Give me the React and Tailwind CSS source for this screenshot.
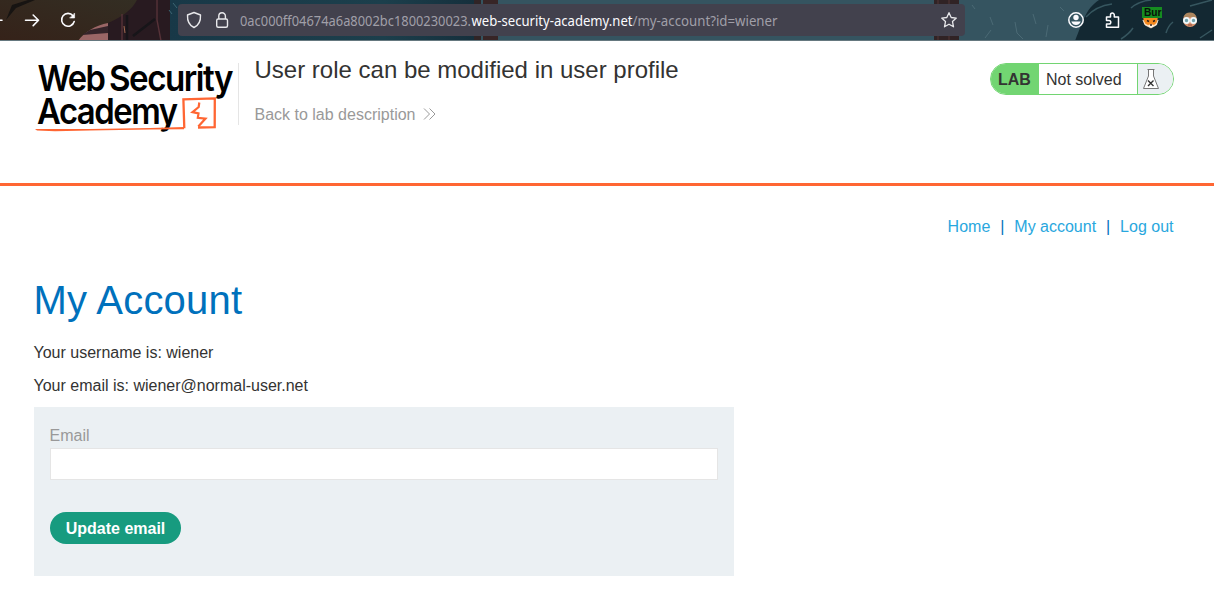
import React from "react";

function ToolbarArt() {
  return (
    <svg className="absolute inset-0" width="1214" height="41" viewBox="0 0 1214 41" aria-hidden="true">
      <defs>
        <linearGradient id="ground" x1="0" x2="1" y1="1" y2="0">
          <stop offset="0" stopColor="#352219" />
          <stop offset="1" stopColor="#332f24" />
        </linearGradient>
        <linearGradient id="sky" x1="0" x2="1" y1="0" y2="0">
          <stop offset="0" stopColor="#183847" />
          <stop offset="0.7" stopColor="#1c3f4c" />
          <stop offset="1" stopColor="#152f3c" />
        </linearGradient>
      </defs>
      <rect width="1214" height="41" fill="#355460" />
      <rect x="168" width="308" height="41" fill="url(#sky)" />
      <rect width="170" height="41" fill="url(#ground)" />
      <path d="M6 20L16 8L35 0H28L12 5Z" fill="#171412" />
      <path d="M78 41C84 32 96 25 108 23V41Z" fill="#9b6666" />
      <path d="M90 30L108 26V33L82 35Z" fill="#35242a" />
      <path d="M108 23C122 17 132 10 137 0H170V41H108V23Z" fill="#281a20" />
      <path d="M122 14V41M157 0V20L161 41" stroke="#563238" strokeWidth="1.4" fill="none" />
      <path d="M127 41V15M133 36L155 19" stroke="#171519" strokeWidth="2.5" fill="none" />
      <path d="M124 26L125 33" stroke="#a06a50" />
      <path d="M169 10L172 14M173 3L177 8" stroke="#3c6673" />
      <rect x="474" width="7" height="41" fill="#302426" />
      <rect x="483" width="15" height="41" fill="#372526" />
      <rect x="934" width="25" height="41" fill="#302325" />
      <path d="M938 0V41M949 0V41" stroke="#533737" />
      <path d="M1099 0C1085 9 1082 24 1075 41H1214V0Z" fill="#132832" />
      <path d="M1086 17Q1096 6 1112 4M1131 8Q1139 1 1151 0M1190 6L1212 0M1121 39Q1129 34 1133 28M1166 33Q1168 26 1173 22M1200 38L1212 30" stroke="#36565f" strokeWidth="1.5" fill="none" />
      <path d="M972 5L975 9M990 17L993 25M985 38L991 30M1015 22L1017 33L1023 39M1033 14L1036 24M1048 25L1046 37M1060 7L1064 11" stroke="#4b6a75" fill="none" />
      <rect y="40" width="1214" height="1" fill="#65787f" />
    </svg>
  );
}

function BrowserBar() {
  return (
    <div className="relative h-[41px] w-full overflow-hidden">
      <ToolbarArt />
      <div className="relative flex h-10 items-center text-white">
        <svg width="178" height="40" viewBox="0 0 178 40" fill="none" stroke="#fbfbfe" strokeWidth="1.6" strokeLinecap="round" strokeLinejoin="round">
          <path d="M-4 20.3H2M25.5 20.3H38.5M33.2 15L38.5 20.3L33.2 25.6" />
          <path d="M73 15.8A6.4 6.4 0 1 0 74.2 21.5" />
          <path d="M74.6 13.4V18H70Z" fill="#fbfbfe" strokeWidth="0.6" />
        </svg>
        <div className="flex h-8 w-[787px] items-center rounded bg-[#42414d]">
          <svg width="62" height="32" viewBox="178 4 62 32" fill="none" stroke="#e8e8eb" strokeWidth="1.4" strokeLinejoin="round">
            <path d="M194 12.5L200.5 15C200.8 21 198.5 25.5 194 27.5C189.5 25.5 187.2 21 187.5 15Z" />
            <rect x="216.7" y="19" width="10.8" height="8.2" rx="1.5" />
            <path d="M218.8 19V16A3.3 3.3 0 0 1 225.4 16V19" />
          </svg>
          <div className="w-[700px] whitespace-nowrap font-['Noto_Sans',sans-serif] text-[13.5px]">
            <svg width="545" height="32" viewBox="0 0 545 32" className="block">
              <text x="0" y="22" textLength="231" lengthAdjust="spacingAndGlyphs" fill="#a09fa8">0ac000ff04674a6a8002bc1800230023.</text>
              <text x="231.5" y="22" textLength="161" lengthAdjust="spacingAndGlyphs" fill="#fbfbfe">web-security-academy.net</text>
              <text x="392.5" y="22" textLength="145" lengthAdjust="spacingAndGlyphs" fill="#a09fa8">/my-account?id=wiener</text>
            </svg>
          </div>
          <svg width="18" height="18" viewBox="0 0 18 18" fill="none" stroke="#e8e8eb" strokeWidth="1.3" strokeLinejoin="round">
            <path d="M9 1.7L11.2 6.5L16.3 7.1L12.5 10.6L13.5 15.8L9 13.2L4.5 15.8L5.5 10.6L1.7 7.1L6.8 6.5Z" />
          </svg>
        </div>
        <svg width="249" height="40" viewBox="965 0 249 40" fill="none">
          <circle cx="1076" cy="20" r="7.2" stroke="#fbfbfe" strokeWidth="1.5" />
          <circle cx="1076" cy="17.5" r="2.7" fill="#fbfbfe" />
          <path d="M1071.3 21.5H1080.7C1080 24 1078 25 1076 25S1072 24 1071.3 21.5Z" fill="#fbfbfe" />
          <path d="M1106.5 17H1110.5V15A1.9 1.9 0 0 1 1114.3 15V17H1118.5V27.3H1106.5V24H1109A1.8 1.8 0 0 0 1109 20.4H1106.5Z" stroke="#fbfbfe" strokeWidth="1.5" strokeLinejoin="round" />
          <path d="M1143 15L1146 18L1155 18L1158 15L1157 24L1151 28L1144 24Z" fill="#f58a20" />
          <path d="M1143 20L1145 24L1148 25.5L1151 24.5L1154 25.5L1157 23L1158 20L1156.5 25L1151 28L1145 25Z" fill="#fff1df" stroke="#fff1df" strokeWidth="0.6" />
          <path d="M1147 20.5L1149 21.5M1153 21.5L1155 20.5M1150 25H1152" stroke="#30201c" strokeWidth="1.4" />
          <rect x="1142" y="7" width="20" height="11" fill="#168c20" />
          <text x="1144" y="16.3" textLength="17.5" lengthAdjust="spacingAndGlyphs" fontSize="11" fontWeight="700" fontFamily="Liberation Sans, sans-serif" fill="#071008">Bur</text>
          <circle cx="1190" cy="20" r="7" fill="#d7926d" />
          <path d="M1183.5 17A7 7 0 0 1 1196.5 17Z" fill="#ad865e" />
          <circle cx="1186.5" cy="20.5" r="2.6" fill="#70a2ac" stroke="#eef8fb" strokeWidth="1.8" />
          <circle cx="1193.5" cy="20.5" r="2.6" fill="#70a2ac" stroke="#eef8fb" strokeWidth="1.8" />
          <path d="M1188 25H1192" stroke="#8f493f" />
        </svg>
      </div>
    </div>
  );
}

function AcademyLogo() {
  return (
    <svg width="204" height="80" viewBox="34 57 204 80" className="block overflow-visible" aria-label="Web Security Academy">
      <g fontFamily="Inter, Roboto, sans-serif" fontWeight="600" fontSize="35.5" letterSpacing="-1.6" fill="#000">
        <text x="37.5" y="91.3" textLength="67" lengthAdjust="spacingAndGlyphs">Web</text>
        <text x="109" y="91.3" textLength="123" lengthAdjust="spacingAndGlyphs">Security</text>
        <text x="37" y="124.3" textLength="139.5" lengthAdjust="spacingAndGlyphs">Academy</text>
      </g>
      <path d="M35 129L90 128.9L150 128L184 127L184 129.2L150 129.6L90 130.6L55 131.2L37 130.4Z" fill="#ff6633" />
      <path d="M184.3 128.2L183.4 99.4L214.8 98.4L214.7 127.2L198 127.5" fill="none" stroke="#ff6633" strokeWidth="2.3" />
      <path d="M199.3 102.5L198.7 107L192.5 112.2L198.5 113.4L197.8 117.8L205.5 118.6L198.3 126.5" fill="none" stroke="#ff6633" strokeWidth="2.2" />
    </svg>
  );
}

function LabStatus() {
  return (
    <div className="mt-[22px] flex h-8 w-[184px] items-stretch overflow-hidden rounded-full border border-[#72d572] bg-white text-base leading-8 text-[#333332]">
      <div className="w-12 bg-[#72d572] pl-[7px] font-bold">LAB</div>
      <div className="w-[98px] pl-[7px]">Not solved</div>
      <div className="flex-1 border-l border-[#72d572] bg-[#ebf0f3] pt-1 pl-[5px]">
        <svg width="17" height="22" viewBox="0 0 17 22" fill="none" stroke="#777" strokeWidth="1">
          <path d="M4.5 1.5H11.5M5.5 1.5V8L0.5 20.5H15.5L10.5 8V1.5" fill="#fff" />
          <path d="M5 12.5L10.5 18M10.5 12.5L5 18" stroke="#333" strokeWidth="1.4" />
        </svg>
      </div>
    </div>
  );
}

export default function App() {
  return (
    <div className="h-[596px] w-[1214px] overflow-hidden bg-white font-['Liberation_Sans',Arial,sans-serif] text-base text-[#333332]">
      <BrowserBar />
      <header className="flex h-[145px] border-b-3 border-[#ff6633] pr-10 pl-[34px]">
        <div className="pt-4">
          <AcademyLogo />
        </div>
        <div className="mt-[22px] h-[62px] w-px bg-[#e5e5e5]" />
        <div className="flex-1 pt-[14px] pl-[15.5px]">
          <h2 className="text-2xl leading-[30px]">User role can be modified in user profile</h2>
          <a className="mt-5 flex items-center gap-2 leading-5 text-[#999]">
            Back to lab description
            <svg width="13" height="12" viewBox="0 0 13 12" fill="none" stroke="#999" strokeWidth="1" className="-mt-0.5">
              <path d="M1 0.5L6.5 6L1 11.5M6.5 0.5L12 6L6.5 11.5" />
            </svg>
          </a>
        </div>
        <LabStatus />
      </header>
      <main className="px-[34px]">
        <nav className="flex justify-end pt-[31px] pr-[6.5px] leading-5 text-[#29a7de]">
          <a>Home</a>
          <span className="w-6 text-center text-[#0071bc]">|</span>
          <a>My account</a>
          <span className="w-6 text-center text-[#0071bc]">|</span>
          <a>Log out</a>
        </nav>
        <h1 className="-ml-[0.5px] mt-[38px] text-[40px] leading-[50px] tracking-[0.2px] text-[#0071bc]">My Account</h1>
        <p className="-ml-[0.5px] mt-[18px] leading-5">Your username is: wiener</p>
        <p className="-ml-[0.5px] mt-[13px] leading-5">Your email is: wiener@normal-user.net</p>
        <form className="mt-[11px] h-[169px] w-[700px] bg-[#ebf0f3] px-4 pt-[19px]">
          <label className="-ml-[0.5px] block leading-5 text-[#999]">Email</label>
          <input className="mt-0.5 block h-8 w-full border border-[#e5e5e5] bg-white" />
          <button type="button" className="mt-8 h-8 w-[131px] rounded-full bg-[#179b7f] pt-0.5 text-center font-bold text-white">Update email</button>
        </form>
      </main>
    </div>
  );
}
